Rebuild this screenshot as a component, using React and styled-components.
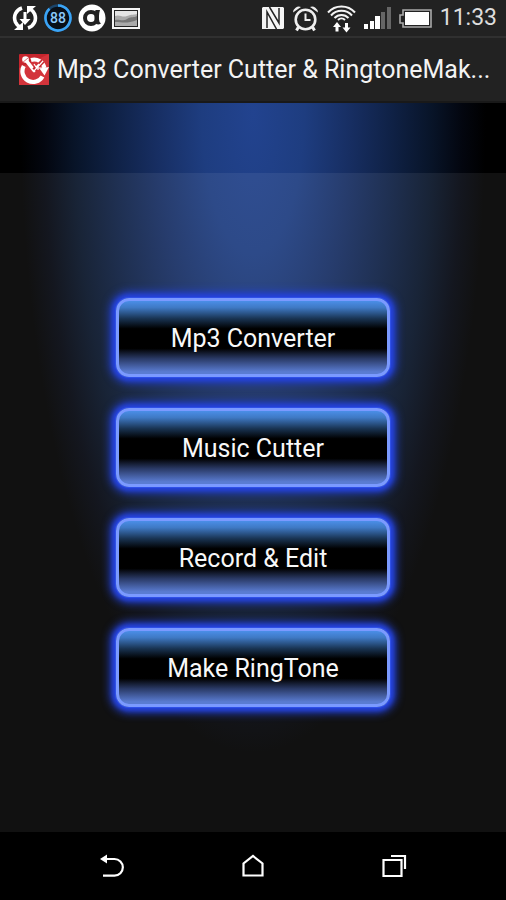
import React from "react";
import styled, { createGlobalStyle } from "styled-components";

const GlobalStyle = createGlobalStyle`
  * { box-sizing: border-box; }
  body {
    margin: 0;
    background: #111;
    color: #f3f3f3;
    font-family: Roboto, "Liberation Sans", sans-serif;
  }
`;

const Screen = styled.div`
  display: flex;
  flex-direction: column;
  min-height: 100vh;
`;

const StatusBar = styled.div`
  display: flex;
  align-items: center;
  justify-content: space-between;
  height: 36px;
  padding: 0 9px 0 12px;
  background: #222;
`;

const StatusGroup = styled.div`
  display: flex;
  align-items: center;
  gap: ${(p) => p.$gap}px;
`;

const Clock = styled.time`
  font-size: 23px;
  line-height: 36px;
  color: #ddd;
`;

const TitleBar = styled.header`
  display: flex;
  align-items: center;
  gap: 8px;
  height: 67px;
  padding: 0 10px 0 19px;
  background: #222;
  border-top: 2px solid #303030;
  border-bottom: 2px solid #191919;
`;

const AppIcon = styled.svg`
  flex: none;
`;

const Title = styled.h1`
  flex: 1;
  min-width: 0;
  margin: 0;
  white-space: nowrap;
  font-size: 25px;
  line-height: 36px;
  font-weight: 400;
`;

const Main = styled.main`
  flex: 1;
  display: flex;
  flex-direction: column;
  align-items: center;
  justify-content: center;
  gap: 31px;
  padding: 70px 0 0;
  background:
    radial-gradient(
      ellipse 46% 640px at 50% 10px,
      #22438f 0%,
      #1e3d80 22%,
      #172e62 42%,
      #0f2145 60%,
      #081428 77%,
      #03060f 90%,
      #000 100%
    ),
    linear-gradient(#000 70px, #111 70px);
  background-blend-mode: screen, normal;
`;

const MenuButton = styled.button`
  width: 54%;
  height: 79px;
  padding: 3px 0 0;
  border: 3px solid #7b9aff;
  border-radius: 13px;
  background: linear-gradient(
    #4a8ee8 0%,
    #3f79c4 9%,
    #193453 24%,
    #000 38%,
    #000 65%,
    #2a3a66 79%,
    #5a7cd2 97%
  );
  box-shadow:
    0 0 0 1px #2f50e8,
    0 0 4px 3px #2643dc,
    0 0 8px 6px #2340d0;
  color: #f8f8f8;
  font-family: inherit;
  font-size: 25px;
  line-height: 30px;
`;

const NavBar = styled.nav`
  display: flex;
  justify-content: space-between;
  align-items: center;
  height: 68px;
  padding: 0 17%;
  background: #000;
`;

const NavButton = styled.button`
  display: flex;
  align-items: center;
  justify-content: center;
  width: 52px;
  height: 48px;
  padding: 0;
  border: 0;
  background: none;
  color: #fff;
`;

const SyncIcon = () => (
  <svg width="26" height="26" viewBox="0 0 26 26" fill="none" stroke="#fff" strokeWidth="3.600">
    <path d="M10 3C4 5 1 11 3.400 17 4.500 19.500 6 21 8 22" />
    <path d="M16 23C22 21 25 15 22.600 9 21.500 6.500 20 5 18 4" />
    <path d="M2 25h9v-8zM24 1h-9v8z" fill="#fff" stroke="none" />
    <path d="M11.500 7h3v7h4L13 20l-5.500-6h4z" fill="#fff" stroke="none" />
  </svg>
);

const BatteryPercent = () => (
  <svg width="28" height="28" viewBox="0 0 28 28">
    <circle cx="14" cy="14" r="12.500" fill="#080f18" stroke="#1b4469" strokeWidth="2.500" />
    <path d="M14 1.500A12.500 12.500 0 1 1 5.500 4.800" fill="none" stroke="#3ba4f5" strokeWidth="2.600" />
    <text x="14" y="19" textAnchor="middle" fontSize="14" fontWeight="500" fill="#8cc8fa" fontFamily="Roboto, sans-serif">88</text>
  </svg>
);

const AvastIcon = () => (
  <svg width="28" height="28" viewBox="0 0 28 28">
    <circle cx="14" cy="14" r="13.500" fill="#fff" />
    <circle cx="13" cy="14" r="6" fill="none" stroke="#222" strokeWidth="4" />
    <path d="M16.500 12q0-3 1-6h4.500q-1 3-1 6v3.500q0 2.500 2 4-4.500 2.500-6.500-2z" fill="#222" />
  </svg>
);

const PictureIcon = () => (
  <svg width="28" height="21" viewBox="0 0 28 21">
    <rect x="1" y="1" width="26" height="19" fill="#222" stroke="#f4f4f4" strokeWidth="2" />
    <rect x="3" y="3" width="22" height="15" fill="#e5e5e5" />
    <path d="M3 8c5-2 7 2 12 0s7-1 10-2v12H3z" fill="#aaa" />
    <path d="M3 12c5-1 7 2 12-1s7-1 10-3v10H3z" fill="#777" />
    <path d="M3 14c7 0 12 2 22-2v6H3z" fill="#aaa" />
  </svg>
);

const NfcIcon = () => (
  <svg width="22" height="22" viewBox="0 0 22 22">
    <path d="M1 0h20l1 1v20l-1 1H0V1z" fill="#f4f4f4" />
    <path d="M5 21V5l9.500 17M7.500 0L17 16V1" fill="none" stroke="#222" strokeWidth="1.500" />
  </svg>
);

const AlarmIcon = () => (
  <svg width="27" height="27" viewBox="0 0 27 27" fill="none" stroke="#eee">
    <circle cx="13.500" cy="14.500" r="9.800" strokeWidth="2.600" />
    <path d="M13.500 8.500V15h5" strokeWidth="2" />
    <path d="M6.500 22l-2 3.500M20.500 22l2 3.500" strokeWidth="3" />
    <path d="M1 7.500A6 6 0 0 1 9 2zM26 7.500A6 6 0 0 0 18 2z" fill="#eee" stroke="none" />
  </svg>
);

const WifiIcon = () => (
  <svg width="29" height="29" viewBox="0 0 29 29" fill="none" stroke="#f4f4f4" strokeWidth="2">
    <path d="M1 8.500A18 18 0 0 1 28 8.500M4 11.500A14 14 0 0 1 25 11.500M7.500 14A9.500 9.500 0 0 1 21.500 14M11 16A5 5 0 0 1 18 16" />
    <path d="M10 18l4 5h-2.500v4.500h-3V23H6zM19.500 28.500l-4-5H18V19h3v4.500h2.500z" fill="#fff" stroke="none" />
  </svg>
);

const SignalIcon = () => (
  <svg width="27" height="22" viewBox="0 0 27 22" shapeRendering="crispEdges">
    <path d="M0 17h4v5H0zM6 14h4v8H6zM11 9h5v13h-5z" fill="#fff" />
    <path d="M17 5h4v17h-4zM23 0h4v22h-4z" fill="#666" />
  </svg>
);

const BatteryIcon = () => (
  <svg width="33" height="19" viewBox="0 0 33 19">
    <path d="M4 1h28v17H4v-4H1V6h3z" fill="#222" stroke="#aaa" strokeWidth="1.600" />
    <rect x="6" y="3" width="24" height="13" fill="#fff" />
  </svg>
);

const Logo = () => (
  <AppIcon width="30" height="31" viewBox="0 0 30 31" aria-hidden="true">
    <rect width="30" height="31" rx="1" fill="#c6252d" />
    <path d="M0 31V14L30 0v31z" fill="#d3343b" />
    <path d="M4.800 12A10.500 10.500 0 0 0 23.500 22.500" fill="none" stroke="#fff" strokeWidth="4.200" />
    <path d="M12 6A10.500 10.500 0 0 1 25.500 14" fill="none" stroke="#fff" strokeWidth="4" />
    <path d="M20.500 14.500l9.500-1.500-4.500 8.500z" fill="#fff" />
    <path d="M8 7.500l7 9" stroke="#fff" strokeWidth="3.600" strokeLinecap="round" />
    <circle cx="6.500" cy="5.500" r="3.300" fill="#fff" />
    <path d="M3 9l6-5" stroke="#d3343b" strokeWidth="0.700" />
    <path d="M15 16l9-9" stroke="#c6252d" strokeWidth="4.500" />
    <path d="M15 10l2 3 3-3M15 17l9-10M18 14h6M19 11v5" fill="none" stroke="#fff" strokeWidth="1.200" />
  </AppIcon>
);

const BackIcon = () => (
  <svg width="26" height="24" viewBox="0 0 26 24" fill="none" stroke="currentColor" strokeWidth="2.200">
    <path d="M6 5h9.500a8.300 8.300 0 0 1 0 16.700H4" />
    <path d="M1 5l7-4.500v9z" fill="currentColor" stroke="none" />
  </svg>
);

const HomeIcon = () => (
  <svg width="22" height="24" viewBox="0 0 22 24" fill="none" stroke="currentColor" strokeWidth="2.200">
    <path d="M1.500 21.500V9.500L11 2l9.500 7.500v12z" />
  </svg>
);

const RecentIcon = () => (
  <svg width="26" height="24" viewBox="0 0 26 24" fill="none" stroke="currentColor" strokeWidth="2.200">
    <path d="M2.500 6h18v16h-18zM10 2h14v13" />
  </svg>
);

const actions = ["Mp3 Converter", "Music Cutter", "Record & Edit", "Make RingTone"];

export default function App() {
  return (
    <Screen>
      <GlobalStyle />
      <StatusBar>
        <StatusGroup $gap={6}>
          <SyncIcon />
          <BatteryPercent />
          <AvastIcon />
          <PictureIcon />
        </StatusGroup>
        <StatusGroup $gap={8}>
          <NfcIcon />
          <AlarmIcon />
          <WifiIcon />
          <SignalIcon />
          <BatteryIcon />
          <Clock>11:33</Clock>
        </StatusGroup>
      </StatusBar>
      <TitleBar>
        <Logo />
        <Title>Mp3 Converter Cutter &amp; RingtoneMak...</Title>
      </TitleBar>
      <Main>
        {actions.map((label) => (
          <MenuButton key={label} type="button">{label}</MenuButton>
        ))}
      </Main>
      <NavBar>
        <NavButton type="button" aria-label="Back"><BackIcon /></NavButton>
        <NavButton type="button" aria-label="Home"><HomeIcon /></NavButton>
        <NavButton type="button" aria-label="Recent apps"><RecentIcon /></NavButton>
      </NavBar>
    </Screen>
  );
}
